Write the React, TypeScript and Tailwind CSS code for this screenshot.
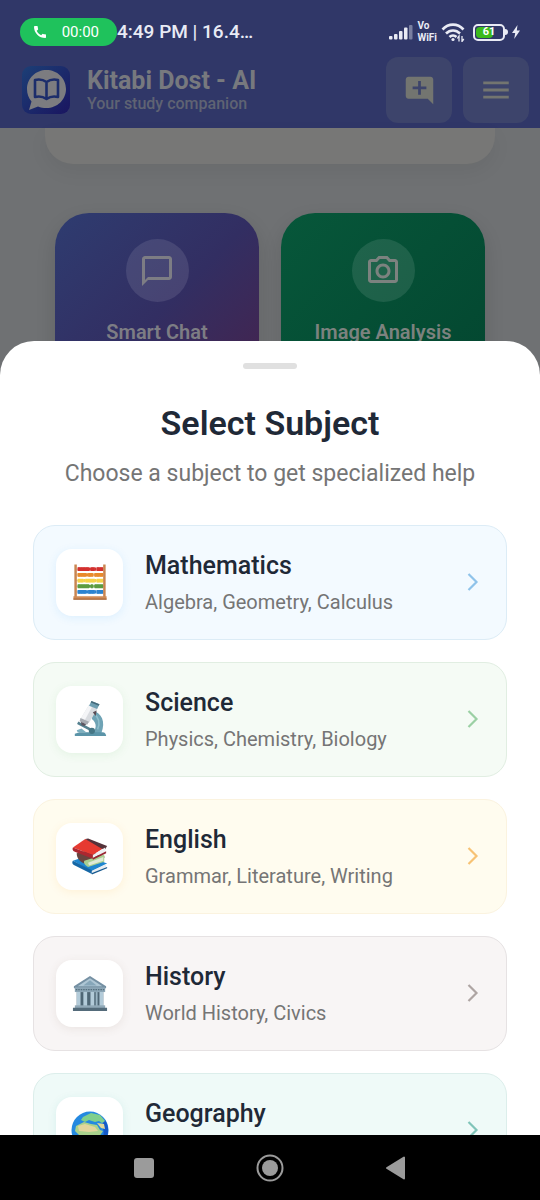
import React, { useState } from 'react';
import { MdAddComment, MdMenu, MdOutlineCameraAlt, MdChatBubbleOutline, MdCall } from 'react-icons/md';

interface Subject {
  id: string;
  name: string;
  topics?: string;
  icon: React.FC;
  card: string;
  tile: string;
  arrow: string;
}

const AbacusIcon = () => {
  const rows = ['#d3302f', '#e98a2b', '#f6d34a', '#5d9c41', '#2b83d0'];
  return (
    <svg viewBox="0 0 38 40" className="w-9 h-[38px]" aria-hidden="true">
      {rows.map((c, i) => (
        <g key={c}>
          <path d={`M4 ${6.5 + i * 6}H34`} stroke="#c9b9a5" strokeWidth="0.8" />
          <path
            d={`M6 ${6.5 + i * 6}H${18 - (i % 3) * 3}M${20 - (i % 3) * 3} ${6.5 + i * 6}H${24 - (i % 2) * 2}M${26 - (i % 2) * 2} ${6.5 + i * 6}H33`}
            stroke={c}
            strokeWidth="4"
          />
          <path d={`M6 ${6.5 + i * 6}H33`} stroke={c} strokeWidth="3.4" strokeDasharray="2.4 0.5" />
        </g>
      ))}
      <path d="M3.8 1.5V36M34.2 1.5V36" stroke="#c98550" strokeWidth="2.6" />
      <path d="M1.5 35H36.5V38.5H1.5Z" fill="#cf8b56" />
      <path d="M1.5 37.5H36.5V38.8H1.5Z" fill="#a9683b" />
    </svg>
  );
};

const MicroscopeIcon = () => (
  <svg viewBox="0 0 38 40" className="w-9 h-[38px]" aria-hidden="true">
    <path d="M22 11C31 14 36 22 31 35H20C26 32 27 25 21 20Z" fill="#6fa3b5" />
    <path d="M23 14C28 18 30 24 27 31" stroke="#8fbfcd" strokeWidth="1.6" fill="none" />
    <path d="M3 38V35.5L8 34H32C35 34 36 36 36 38Z" fill="#5b94a8" />
    <path d="M5 32L10 30L15 34H6Z" fill="#7db0c0" />
    <path d="M6 24L19 31" stroke="#54808f" strokeWidth="2.8" />
    <circle cx="21" cy="32.5" r="3.3" fill="#457685" />
    <path d="M18 5L27 9L18 24L9 20Z" fill="#d9dce0" />
    <path d="M18 5L21.5 6.5L13 22L9 20Z" fill="#f4f5f7" />
    <path d="M9 19L18 23L16 26L8 22.5Z" fill="#a6aab0" />
    <path d="M9.5 23L15 25.5L13 27.5L10 26.5Z" fill="#5b5560" />
    <path d="M20.5 1L29 4.5L26.5 9.5L18 6Z" fill="#6f9fb2" />
    <path d="M20.5 1L29 4.5L28.3 6L19.8 2.6Z" fill="#466b7b" />
    <path d="M22 13L26 11L25 17Z" fill="#5b4d55" />
  </svg>
);

const BooksIcon = () => (
  <svg viewBox="0 0 40 40" className="w-[38px] h-[38px]" aria-hidden="true">
    <path d="M2 25L17 20L38 28L22 36Z" fill="#1f86cf" />
    <path d="M2 25L22 35L22 39L3 29.5C1 28.500 1 26 2 25Z" fill="#1567a6" />
    <path d="M22 35.500L37 28.500V32L22 38Z" fill="#e9eef2" />
    <path d="M22 38L38 31.500V33L22 39.500Z" fill="#16598f" />
    <path d="M6 17L18 14L36 21L18 29C9 27 6 22 6 17Z" fill="#6a443e" />
    <path d="M14 25L35 18.500V26L18 31.500C14.500 30 13 27 14 25Z" fill="#a9cf91" />
    <path d="M18 27L34 21V25L19 30Z" fill="#dfead6" />
    <path d="M2 11L15 2L37 10L23 19Z" fill="#e63a31" />
    <path d="M15 2L18 1.500L38 9.500L36 13L32 12Z" fill="#54323a" />
    <path d="M2 11L23 19V23L4 15.500C1.500 14.500 1.200 12.500 2 11Z" fill="#ad2730" />
    <path d="M23 19L36 11V15.500L23 22Z" fill="#eef0f2" />
    <path d="M23 22L37 15V17L23 24Z" fill="#982632" />
  </svg>
);

const MuseumIcon = () => (
  <svg viewBox="0 0 38 40" className="w-9 h-[38px]" aria-hidden="true">
    <path d="M19 2L36 13V15H2V13Z" fill="#7590a3" />
    <path d="M19 4.500L32 13H6Z" fill="#aec6d4" />
    <path d="M19 6.500L26 12H12Z" fill="#86a6b9" />
    <path d="M3 14H35V19H3Z" fill="#8ba5b5" />
    <path d="M4 16.500H34" stroke="#546e7d" strokeWidth="1.4" strokeDasharray="1.6 1" />
    <path d="M5 19H33V34H5Z" fill="#4e6675" />
    <path d="M5 19H9V34H5ZM12 19H16V34H12ZM19.500 19H23.500V34H19.500ZM29 19H33V34H29Z" fill="#b3cbd9" />
    <path d="M25 19H27V34H25Z" fill="#9bb5c4" />
    <path d="M3 33H35V36H3Z" fill="#91a9b8" />
    <path d="M1 35.500H37V39H1Z" fill="#546b7a" />
  </svg>
);

const GlobeIcon = () => (
  <svg viewBox="0 0 38 38" className="w-[38px] h-[38px]" aria-hidden="true">
    <circle cx="19" cy="19" r="18.500" fill="#2489e0" />
    <path d="M34 9A18.500 18.500 0 0 1 24 37C31 32 35 24 31 14Z" fill="#1559c8" />
    <path d="M12 6L20 2L29 4L34 10L31 12L28 10L24 11L18 9L14 11L10 9Z" fill="#7fcf8c" />
    <path d="M5 15L13 11L20 13L26 14L29 19L32 20L28 26L25 33L20 35L17 26L8 24L4 20Z" fill="#a9d28c" />
    <path d="M7 15L14 13L24 16L27 20L18 21L8 20Z" fill="#e2d59c" />
    <path d="M26 12L33 13L34 18L30 17Z" fill="#dfd79b" />
  </svg>
);

const subjects: Subject[] = [
  { id: 'math', name: 'Mathematics', topics: 'Algebra, Geometry, Calculus', icon: AbacusIcon, card: 'bg-[#f3faff] border-[#dcecf6]', tile: 'shadow-[0_2px_10px_rgba(33,150,243,0.1)]', arrow: 'text-[#8fc3ea]' },
  { id: 'science', name: 'Science', topics: 'Physics, Chemistry, Biology', icon: MicroscopeIcon, card: 'bg-[#f5fbf5] border-[#e1eee2]', tile: 'shadow-[0_2px_10px_rgba(76,175,80,0.1)]', arrow: 'text-[#9bd0a4]' },
  { id: 'english', name: 'English', topics: 'Grammar, Literature, Writing', icon: BooksIcon, card: 'bg-[#fffcef] border-[#fbf3df]', tile: 'shadow-[0_2px_10px_rgba(255,152,0,0.1)]', arrow: 'text-[#f7c274]' },
  { id: 'history', name: 'History', topics: 'World History, Civics', icon: MuseumIcon, card: 'bg-[#f8f5f5] border-[#e6e2e3]', tile: 'shadow-[0_2px_10px_rgba(121,85,72,0.1)]', arrow: 'text-[#aea5a3]' },
  { id: 'geography', name: 'Geography', icon: GlobeIcon, card: 'bg-[#effaf8] border-[#dceeeb]', tile: 'shadow-[0_2px_10px_rgba(0,150,136,0.1)]', arrow: 'text-[#80c4b9]' },
];

const StatusBar = () => (
  <div className="flex items-center justify-between pl-5 pr-5 h-8 text-[#e9ebf5]">
    <div className="flex items-center">
      <div className="flex items-center justify-between w-[97px] h-7 pl-3 pr-[18px] rounded-full bg-[#1fc25c] text-white">
        <MdCall className="w-4 h-4" />
        <span className="text-[15px]">00:00</span>
      </div>
      <span className="text-[19px] font-medium whitespace-nowrap">4:49 PM | 16.4…</span>
    </div>
    <div className="flex items-center gap-1">
      <svg viewBox="0 0 24 16" className="w-6 h-4" fill="currentColor" aria-hidden="true">
        <rect x="0" y="12" width="3.500" height="3.500" rx="1" />
        <rect x="5" y="10" width="3.500" height="5.500" rx="1" />
        <rect x="10" y="7" width="3.500" height="8.500" rx="1" />
        <rect x="15" y="3.500" width="3.500" height="12" rx="1" />
        <rect x="20" y="1" width="3.500" height="14.500" rx="1" opacity="0.4" />
      </svg>
      <div className="flex flex-col text-[10px] leading-3 font-bold">
        <span>Vo</span>
        <span>WiFi</span>
      </div>
      <svg viewBox="0 0 24 20" className="w-6 h-5" fill="none" stroke="currentColor" strokeWidth="2.600" aria-hidden="true">
        <path d="M1.500 7.500C7.500 1 16.500 1 22.500 7.500" />
        <path d="M5 11.500C9 7.500 15 7.500 19 11.500" />
        <path d="M8.500 15C10.500 13 13.500 13 15.500 15" />
        <circle cx="12" cy="17.500" r="1.600" fill="currentColor" stroke="none" />
        <path d="M18 19.500V14L16.300 16.500M21 14V19.500L22.800 17" strokeWidth="1.300" />
      </svg>
      <div className="flex items-center ml-1">
        <div className="relative flex items-center justify-center w-8 h-[17px] rounded-[5px] border-2 border-current p-0.5">
          <div className="absolute left-px top-px bottom-px w-[17px] rounded-sm bg-[#3cba1c]" />
          <span className="relative text-[11px] leading-3 font-bold text-white">61</span>
        </div>
        <div className="w-[3px] h-1.5 rounded-r-sm bg-current" />
      </div>
      <svg viewBox="0 0 8 14" className="w-2 h-3.5" fill="currentColor" aria-hidden="true">
        <path d="M5.500 0L0 8H3.200L2.200 14L8 5.500H4.800Z" />
      </svg>
    </div>
  </div>
);

const AppLogo = () => (
  <svg viewBox="0 0 48 48" className="w-12 h-12 shrink-0" aria-hidden="true">
    <defs>
      <linearGradient id="logo" x1="0" y1="0" x2="1" y2="1">
        <stop offset="0" stopColor="#1c3f76" />
        <stop offset="1" stopColor="#1a1560" />
      </linearGradient>
    </defs>
    <rect width="48" height="48" rx="9" fill="url(#logo)" />
    <path d="M24.500 4C35 4 44 12 44 23C44 34 35 42 24.500 42C21.500 42 18.500 41.500 16 40.500L7 44L9.500 35.500C6.500 32 5 28 5 23C5 12 14 4 24.500 4Z" fill="#7c7c80" />
    <path d="M24.500 16C21 13.500 17 13 13 14V31C17 30 21 30.500 24.500 33C28 30.500 32 30 36 31V14C32 13 28 13.500 24.500 16ZM24.500 16V33" fill="none" stroke="#1c2d6b" strokeWidth="2.600" strokeLinejoin="round" />
  </svg>
);

const AppHeader = () => (
  <header className="bg-[#303768] pt-4 pb-[5px]">
    <StatusBar />
    <div className="flex items-center pl-[22px] pr-[11px] pt-[9px]">
      <AppLogo />
      <div className="flex-1 pl-[17px] pt-0.5">
        <h1 className="text-[25px] leading-[26px] font-bold text-[#77797e]">Kitabi Dost - AI</h1>
        <p className="text-base leading-5 font-medium text-[#5f6373]">Your study companion</p>
      </div>
      <div className="flex gap-[11px]">
        <button aria-label="New chat" className="flex items-center justify-center w-[66px] h-[66px] rounded-xl bg-[#3d446b] text-[#737570]">
          <MdAddComment className="w-[33px] h-[33px]" />
        </button>
        <button aria-label="Menu" className="flex items-center justify-center w-[66px] h-[66px] rounded-xl bg-[#3d446b] text-[#737570]">
          <MdMenu className="w-[34px] h-[34px]" />
        </button>
      </div>
    </div>
  </header>
);

const HomePage = () => (
  <main className="flex-1 bg-[#6f7173]">
    <div className="mx-[45px] h-9 rounded-b-[28px] bg-[#777776] shadow-[0_8px_20px_rgba(0,0,0,0.05)]" />
    <div className="grid grid-cols-2 gap-[22px] px-[55px] pt-[49px]">
      <button className="flex flex-col items-center h-[204px] pt-[26px] rounded-[34px] bg-linear-135 from-[#2e3c70] via-[#322e62] to-[#46204a] shadow-[0_8px_20px_rgba(0,0,0,0.12)]">
        <span className="flex items-center justify-center w-[63px] h-[63px] rounded-full bg-white/10 text-[#7d7d84]">
          <MdChatBubbleOutline className="w-9 h-9" />
        </span>
        <span className="mt-4 text-xl leading-7 font-semibold text-[#7d7d84]">Smart Chat</span>
      </button>
      <button className="flex flex-col items-center h-[204px] pt-[26px] rounded-[34px] bg-linear-135 from-[#07573a] to-[#03452f] shadow-[0_8px_20px_rgba(0,0,0,0.12)]">
        <span className="flex items-center justify-center w-[63px] h-[63px] rounded-full bg-white/10 text-[#7c827f]">
          <MdOutlineCameraAlt className="w-9 h-9" />
        </span>
        <span className="mt-4 text-xl leading-7 font-semibold text-[#7c827f]">Image Analysis</span>
      </button>
    </div>
  </main>
);

interface SubjectCardProps {
  subject: Subject;
  onSelect: (id: string) => void;
}

const SubjectCard: React.FC<SubjectCardProps> = ({ subject, onSelect }) => (
  <button
    onClick={() => onSelect(subject.id)}
    className={`flex items-center w-full px-[22px] py-[23px] rounded-[22px] border text-left ${subject.card}`}
  >
    <span className={`flex items-center justify-center w-[67px] h-[67px] shrink-0 rounded-2xl bg-white ${subject.tile}`}>
      <subject.icon />
    </span>
    <span className="flex flex-col flex-1 self-start pl-[22px]">
      <span className="text-[25px] leading-[34px] font-medium text-[#1f2937]">{subject.name}</span>
      {subject.topics && <span className="mt-1.5 text-xl leading-[27px] text-[#757575]">{subject.topics}</span>}
    </span>
    <svg viewBox="0 0 22 22" className={`w-[22px] h-[22px] shrink-0 ${subject.arrow}`} fill="none" stroke="currentColor" strokeWidth="2.200" aria-hidden="true">
      <path d="M6.500 3L14.500 11L6.500 19" />
    </svg>
  </button>
);

const SubjectSheet: React.FC<{ onSelect: (id: string) => void }> = ({ onSelect }) => (
  <section
    role="dialog"
    aria-labelledby="sheet-title"
    className="absolute inset-x-0 bottom-0 h-[70%] flex flex-col rounded-t-[34px] bg-white overflow-hidden"
  >
    <div className="self-center mt-[22px] w-[54px] h-1.5 shrink-0 rounded-full bg-[#e0e0e0]" />
    <h2 id="sheet-title" className="mt-[34px] text-center text-[34px] leading-10 font-semibold text-[#1f2937]">Select Subject</h2>
    <p className="mt-4 text-center text-[23px] leading-[30px] text-[#757575]">Choose a subject to get specialized help</p>
    <div className="flex-1 min-h-0 mt-9 px-[33px] overflow-hidden">
      <div className="flex flex-col gap-[22px]">
        {subjects.map((s) => (
          <SubjectCard key={s.id} subject={s} onSelect={onSelect} />
        ))}
      </div>
    </div>
  </section>
);

const NavBar = () => (
  <nav className="flex items-center justify-center gap-[98px] h-[65px] shrink-0 bg-black text-[#9b9b9b]">
    <button aria-label="Recent apps">
      <svg viewBox="0 0 28 28" className="w-7 h-7" fill="currentColor"><rect x="4" y="4" width="20" height="20" rx="3" /></svg>
    </button>
    <button aria-label="Home">
      <svg viewBox="0 0 28 28" className="w-7 h-7" fill="currentColor">
        <circle cx="14" cy="14" r="12.500" fill="none" stroke="currentColor" strokeWidth="2" />
        <circle cx="14" cy="14" r="8" />
      </svg>
    </button>
    <button aria-label="Back">
      <svg viewBox="0 0 28 28" className="w-7 h-7" fill="currentColor" stroke="currentColor" strokeWidth="2" strokeLinejoin="round"><path d="M5 14L22 3.500V24.500Z" /></svg>
    </button>
  </nav>
);

export default function App() {
  const [, setSelected] = useState<string | null>(null);

  return (
    <div className="flex flex-col h-screen overflow-hidden font-[Roboto,sans-serif]">
      <div className="relative flex flex-col flex-1 min-h-0 overflow-hidden">
        <AppHeader />
        <HomePage />
        <SubjectSheet onSelect={setSelected} />
      </div>
      <NavBar />
    </div>
  );
}
